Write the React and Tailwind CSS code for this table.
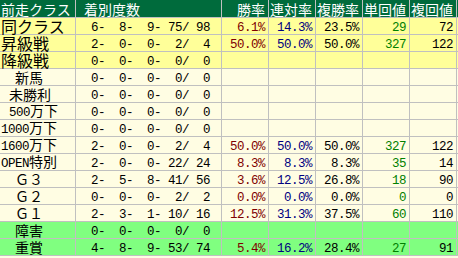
import React from 'react'

const pad3 = n => String(n).padStart(3, ' ')
const recText = r => `${pad3(r[0])}-${pad3(r[1])}-${pad3(r[2])}-${pad3(r[3])}/${pad3(r[4])}`

const YELLOW = 'bg-[#ffff99]'
const CREAM = 'bg-[#fffde3]'
const GREEN = 'bg-[#80ff80]'
const ZERO = [0, 0, 0, 0, 0]

const rows = [
  { label: '同クラス', big: true, pl: 'pl-[1px]', bg: YELLOW, rec: [6, 8, 9, 75, 98], stats: ['6.1%', '14.3%', '23.5%', '29', '72'] },
  { label: '昇級戦', big: true, pl: 'pl-[1px]', bg: YELLOW, rec: [2, 0, 0, 2, 4], stats: ['50.0%', '50.0%', '50.0%', '327', '122'] },
  { label: '降級戦', big: true, pl: 'pl-[1px]', bg: YELLOW, rec: ZERO },
  { label: '新馬', pl: 'pl-[15px]', bg: CREAM, rec: ZERO },
  { label: '未勝利', pl: 'pl-[9px]', bg: CREAM, rec: ZERO },
  { label: '500万下', pl: 'pl-[9px]', bg: CREAM, rec: ZERO },
  { label: '1000万下', pl: 'pl-[1px]', bg: CREAM, rec: ZERO },
  { label: '1600万下', pl: 'pl-[1px]', bg: CREAM, rec: [2, 0, 0, 2, 4], stats: ['50.0%', '50.0%', '50.0%', '327', '122'] },
  { label: 'OPEN特別', pl: 'pl-[1px]', bg: CREAM, rec: [2, 0, 0, 22, 24], stats: ['8.3%', '8.3%', '8.3%', '35', '14'] },
  { label: 'Ｇ３', pl: 'pl-[15px]', bg: CREAM, rec: [2, 5, 8, 41, 56], stats: ['3.6%', '12.5%', '26.8%', '18', '90'] },
  { label: 'Ｇ２', pl: 'pl-[15px]', bg: CREAM, rec: [0, 0, 0, 2, 2], stats: ['0.0%', '0.0%', '0.0%', '0', '0'] },
  { label: 'Ｇ１', pl: 'pl-[15px]', bg: CREAM, rec: [2, 3, 1, 10, 16], stats: ['12.5%', '31.3%', '37.5%', '60', '110'] },
  { label: '障害', pl: 'pl-[15px]', bg: GREEN, rec: ZERO },
  { label: '重賞', pl: 'pl-[15px]', bg: GREEN, rec: [4, 8, 9, 53, 74], stats: ['5.4%', '16.2%', '28.4%', '27', '91'] },
]

const statColors = ['text-[#800000]', 'text-[#000080]', 'text-black', 'text-[#008000]', 'text-black']
const heads = ['勝率', '連対率', '複勝率', '単回値', '複回値']

const mono = "font-['Liberation_Mono',monospace] text-[12.5px] tracking-[-0.5px]"
const jp = "font-['Noto_Sans_CJK_JP',sans-serif]"
const line = 'border-[#c0c0c0]'

function Label({ text, big }) {
  const parts = text.split(/([0-9A-Za-z]+)/)
  return (
    <span className={`${jp} ${big ? 'text-[16px]' : 'text-[14px]'} leading-[16px] whitespace-pre text-black`}>
      {parts.map((p, i) =>
        i % 2 ? <span key={i} className={mono}>{p}</span> : p
      )}
    </span>
  )
}

function Row({ row }) {
  return (
    <div className={`flex h-[17px] ${row.bg}`}>
      <div className={`w-[76px] shrink-0 flex items-center border-r border-b ${line} ${row.pl}`}>
        <Label text={row.label} big={row.big} />
      </div>
      <div className={`w-[146px] shrink-0 border-r border-b ${line} pl-[1px] pt-[4px] leading-[12px] whitespace-pre ${mono}`}>
        {recText(row.rec)}
      </div>
      {heads.map((h, i) => (
        <div
          key={h}
          className={`w-[47px] shrink-0 border-r border-b ${line} pr-[3px] pt-[4px] leading-[12px] text-right whitespace-pre ${mono} ${statColors[i]}`}
        >
          {row.stats ? row.stats[i] : ''}
        </div>
      ))}
      <div className={`flex-1 border-b ${line}`} />
    </div>
  )
}

export default function App() {
  return (
    <div className="w-[458px] h-[258px] overflow-hidden bg-[#fffde3]">
      <div className={`flex h-[18px] bg-[#006b3c] text-white ${jp} text-[14px] leading-[16px]`}>
        <div className={`w-[76px] shrink-0 flex items-center pl-[1px] border-r border-b ${line}`}>前走クラス</div>
        <div className={`w-[146px] shrink-0 flex items-center pl-[8px] border-r border-b ${line}`}>着別度数</div>
        {heads.map(h => (
          <div key={h} className={`w-[47px] shrink-0 flex items-center justify-end pr-[3px] border-r border-b ${line}`}>
            {h}
          </div>
        ))}
        <div className={`flex-1 border-b ${line}`} />
      </div>
      {rows.map(r => (
        <Row key={r.label} row={r} />
      ))}
    </div>
  )
}
